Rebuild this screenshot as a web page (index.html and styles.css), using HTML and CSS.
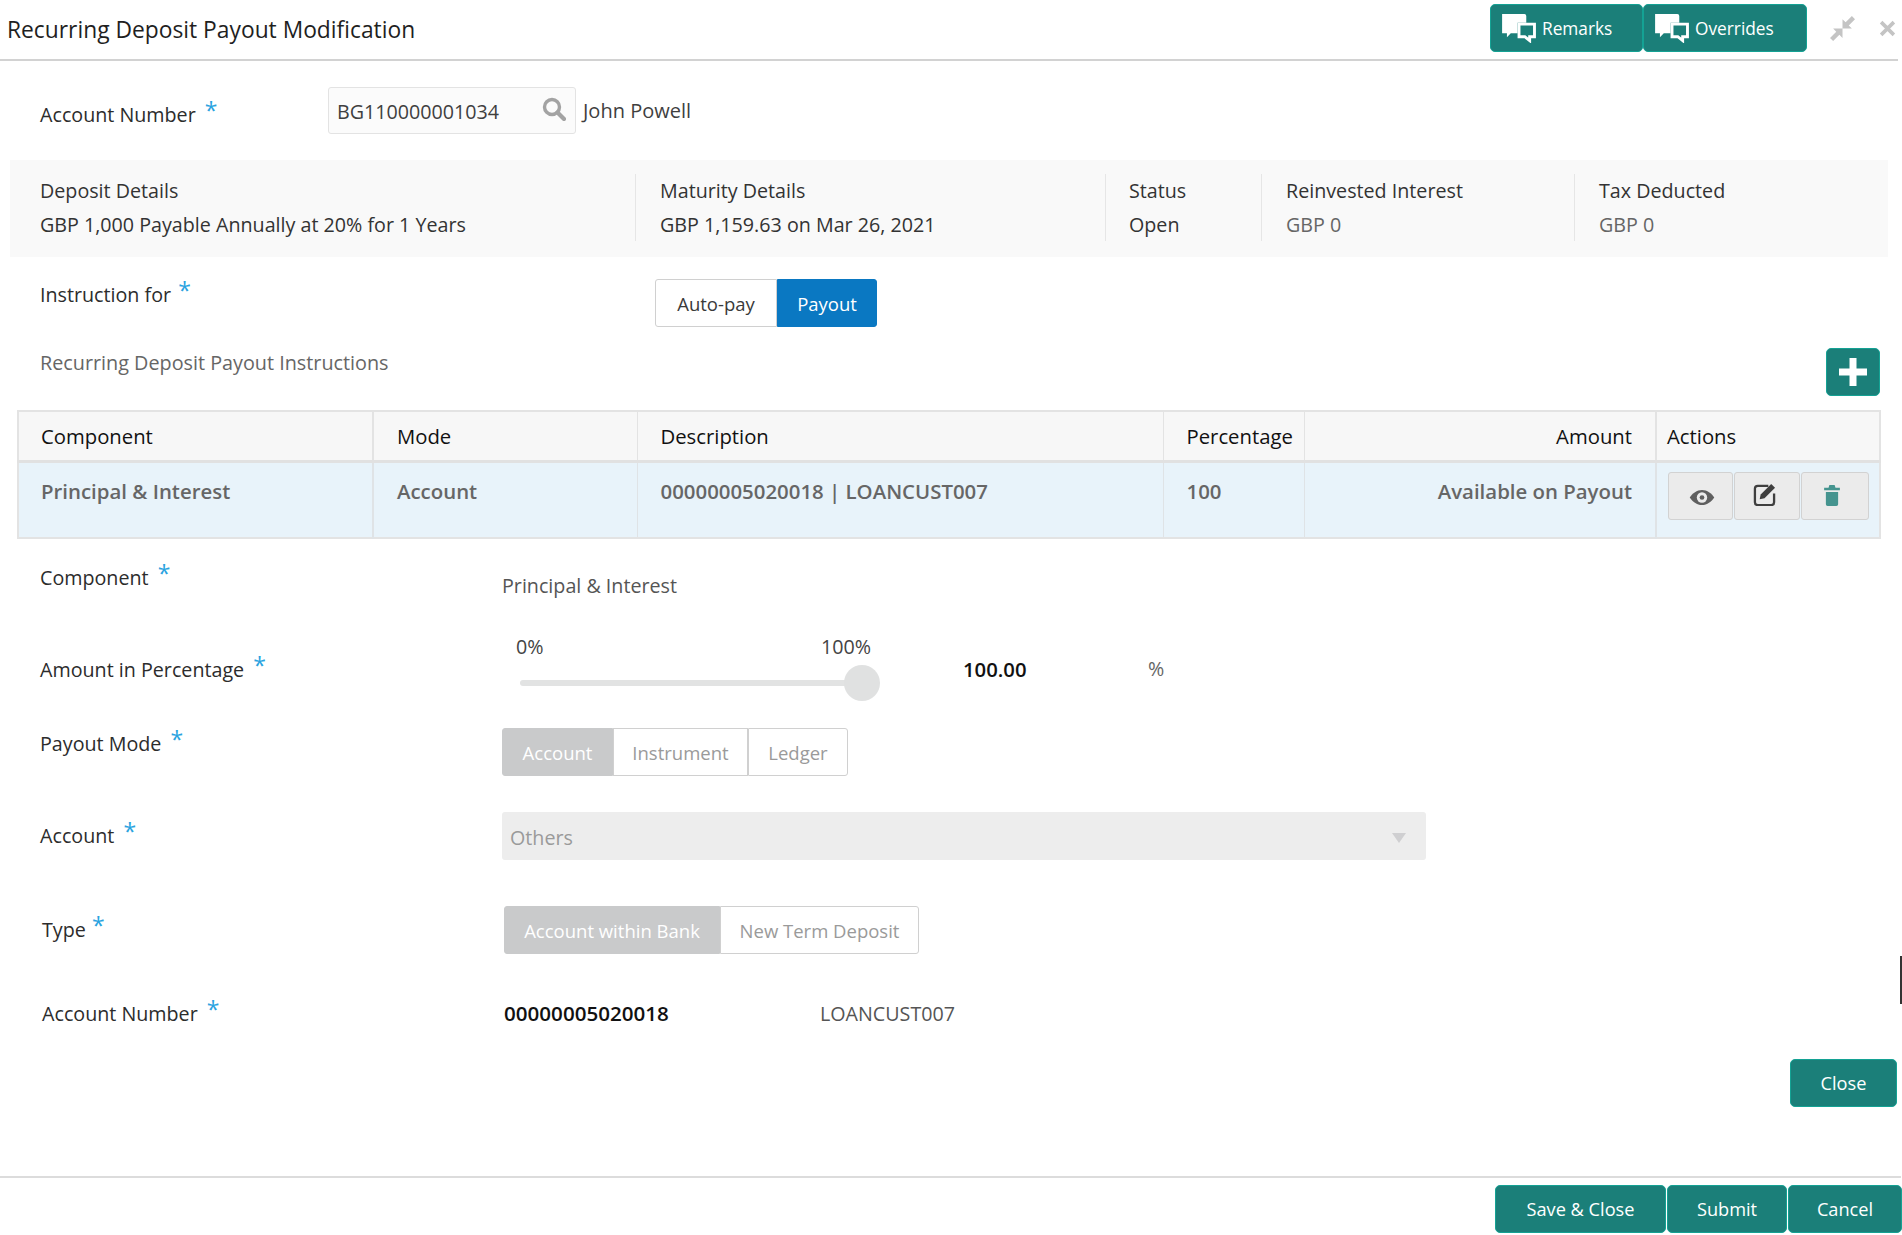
FILE: index.html
```html
<!DOCTYPE html>
<html lang="en">
<head>
<meta charset="utf-8">
<title>Recurring Deposit Payout Modification</title>
<link rel="stylesheet" href="styles.css">
</head>
<body>
<header class="topbar">
  <h1 class="title">Recurring Deposit Payout Modification</h1>
  <div class="top-actions">
    <div class="btn-group btn-group-top">
      <button class="btn btn-top btn-remarks"><svg class="chat" viewBox="0 0 36 30"><path d="M0 0h23a2 2 0 0 1 2 2v7h-9v11H9l-4 4v-4H0z" fill="#fff"/><path d="M17.500 10.500h16v13h-5v4l-5-4h-6z" fill="#1b7f79" stroke="#fff" stroke-width="3"/></svg>Remarks</button>
      <button class="btn btn-top btn-overrides"><svg class="chat" viewBox="0 0 36 30"><path d="M0 0h23a2 2 0 0 1 2 2v7h-9v11H9l-4 4v-4H0z" fill="#fff"/><path d="M17.500 10.500h16v13h-5v4l-5-4h-6z" fill="#1b7f79" stroke="#fff" stroke-width="3"/></svg>Overrides</button>
    </div>
    <svg class="win-icon win-min" viewBox="0 0 24 24"><path d="M21 0l3 3-6 6 3 3H12V3l3 3zM3 24l-3-3 6-6-3-3h9v9l-3-3z" fill="#c4c4c4"/></svg>
    <svg class="win-icon win-close" viewBox="0 0 16 16"><path d="M2 2l12 12M14 2L2 14" stroke="#c4c4c4" stroke-width="3.400" fill="none"/></svg>
  </div>
</header>

<main class="content">
  <section class="acct-row">
    <label class="label label-acct">Account Number <span class="req">*</span></label>
    <div class="search-input">
      <span class="search-value">BG110000001034</span>
      <svg class="search-icon" viewBox="0 0 24 24"><circle cx="10" cy="10" r="7.500" fill="none" stroke="#a3a3a3" stroke-width="3.400"/><path d="M15.500 15.500L22 22" stroke="#a3a3a3" stroke-width="4.200" stroke-linecap="round"/></svg>
    </div>
    <span class="acct-name">John Powell</span>
  </section>

  <section class="summary">
    <div class="sum-col sum-deposit"><div>Deposit Details</div><div>GBP 1,000 Payable Annually at 20% for 1 Years</div></div>
    <div class="sum-col sum-maturity"><div>Maturity Details</div><div>GBP 1,159.63 on Mar 26, 2021</div></div>
    <div class="sum-col sum-status"><div>Status</div><div>Open</div></div>
    <div class="sum-col sum-reinv"><div>Reinvested Interest</div><div class="muted">GBP 0</div></div>
    <div class="sum-col sum-tax"><div>Tax Deducted</div><div class="muted">GBP 0</div></div>
  </section>

  <section class="instr-row">
    <label class="label label-instr">Instruction for <span class="req req-near">*</span></label>
    <div class="toggle">
      <span class="seg seg-auto">Auto-pay</span><span class="seg seg-on">Payout</span>
    </div>
  </section>

  <section class="list-head">
    <h2 class="list-title">Recurring Deposit Payout Instructions</h2>
    <button class="btn btn-add"><svg viewBox="0 0 28 28"><path d="M10.500 0h7v10.500H28v7H17.500V28h-7V17.500H0v-7h10.500z" fill="#fff"/></svg></button>
  </section>

  <table class="grid">
    <colgroup>
      <col class="c1"><col class="c2"><col class="c3"><col class="c4"><col class="c5"><col class="c6">
    </colgroup>
    <thead>
      <tr><th>Component</th><th>Mode</th><th>Description</th><th>Percentage</th><th class="right">Amount</th><th class="th-actions">Actions</th></tr>
    </thead>
    <tbody>
      <tr>
        <td>Principal &amp; Interest</td><td>Account</td><td>00000005020018 | LOANCUST007</td><td>100</td><td class="right">Available on Payout</td>
        <td class="td-actions">
          <div class="row-actions">
            <button class="act act-view"><svg viewBox="0 0 28 18"><path d="M1 9c3-4.500 7.500-8 13-8s10 3.500 13 8c-3 4.500-7.500 8-13 8S4 13.500 1 9z" fill="#5f5f5f"/><circle cx="14" cy="9" r="5.500" fill="#ebebeb"/><circle cx="14" cy="9" r="2.500" fill="#5f5f5f"/></svg></button>
            <button class="act act-edit"><svg viewBox="0 0 24 24"><path d="M16 3H5a3 3 0 0 0-3 3v14a3 3 0 0 0 3 3h14a3 3 0 0 0 3-3v-9" fill="none" stroke="#3f3f3f" stroke-width="2.400"/><path d="M8 12L19 1l4 4-11 11-5 1z" fill="#3f3f3f"/></svg></button>
            <button class="act act-del"><svg viewBox="0 0 18 24"><path d="M6 0h6l1 3h5v3H0V3h5zM2 8h14v14a2 2 0 0 1-2 2H4a2 2 0 0 1-2-2z" fill="#45948f"/></svg></button>
          </div>
        </td>
      </tr>
    </tbody>
  </table>

  <section class="form">
    <div class="f-row r-comp">
      <label class="label">Component <span class="req">*</span></label>
      <span class="f-text">Principal &amp; Interest</span>
    </div>
    <div class="f-row r-pct">
      <label class="label">Amount in Percentage <span class="req">*</span></label>
      <div class="slider">
        <div class="slider-labels"><span>0%</span><span>100%</span></div>
        <div class="track"><span class="thumb"></span></div>
      </div>
      <span class="pct-value">100.00</span>
      <span class="pct-sign">%</span>
    </div>
    <div class="f-row r-mode">
      <label class="label">Payout Mode <span class="req">*</span></label>
      <div class="toggle toggle-off">
        <span class="seg seg-dis seg-w1">Account</span><span class="seg seg-w2">Instrument</span><span class="seg seg-w3">Ledger</span>
      </div>
    </div>
    <div class="f-row r-acct">
      <label class="label">Account <span class="req">*</span></label>
      <div class="select"><span>Others</span><span class="caret"></span></div>
    </div>
    <div class="f-row r-type">
      <label class="label label-in">Type <span class="req req-near">*</span></label>
      <div class="toggle toggle-off toggle-type">
        <span class="seg seg-dis seg-w4">Account within Bank</span><span class="seg seg-w5">New Term Deposit</span>
      </div>
    </div>
    <div class="f-row r-num">
      <label class="label label-in">Account Number <span class="req">*</span></label>
      <span class="num-value">00000005020018</span>
      <span class="num-name">LOANCUST007</span>
    </div>
    <div class="close-row"><button class="btn btn-close">Close</button></div>
  </section>
</main>

<footer class="footer">
  <div class="btn-group">
    <button class="btn btn-save">Save &amp; Close</button>
    <button class="btn btn-submit">Submit</button>
    <button class="btn btn-cancel">Cancel</button>
  </div>
</footer>
<span class="edge-mark"></span>
</body>
</html>
```

FILE: styles.css
```css
* { box-sizing: border-box; }
html, body { margin: 0; padding: 0; }
body {
  width: 1902px;
  height: 1235px;
  overflow: hidden;
  position: relative;
  display: flex;
  flex-direction: column;
  background: #fff;
  color: #2c2c2c;
  font-family: "Open Sans", "Noto Sans", sans-serif;
  font-size: 19.7px;
}
button { font-family: inherit; cursor: pointer; }

.topbar {
  height: 61px;
  flex: none;
  display: flex;
  justify-content: space-between;
  align-items: flex-start;
  border-bottom: 2px solid #d2d2d2;
  margin-right: 4px;
}
.title {
  margin: 16px 0 0 7px;
  font-size: 22.8px;
  line-height: 28px;
  font-weight: 400;
  color: #1f1f1f;
}
.top-actions { display: flex; align-items: flex-start; padding-top: 4px; width: 408px; }
.btn-group { display: flex; gap: 1px; }
.btn-group-top { gap: 0; }
.btn {
  height: 48px;
  background: #1b7f79;
  border: 1px solid #14a294;
  border-radius: 5px;
  color: #fff;
  font-size: 18.2px;
  padding: 0;
}
.btn-top { display: flex; align-items: center; justify-content: flex-start; padding-left: 11px; gap: 5px; font-size: 17.300px; }
.btn-remarks { width: 153px; }
.btn-overrides { width: 164px; }
.chat { width: 35px; height: 29px; flex: none; }
.win-icon { flex: none; }
.win-min { width: 25px; height: 25px; margin: 12px 0 0 23px; }
.win-close { width: 17px; height: 17px; margin: 16px 0 0 24px; }

.content { flex: 1; display: flex; flex-direction: column; min-height: 0; }

.label { color: #2c2c2c; white-space: nowrap; }
.req { color: #2aa3e0; font-size: 23px; line-height: 14px; position: relative; top: -3px; margin-left: 4px; }
.req-near { margin-left: 2px; }
.r-type .req-near { margin-left: 1px; }

.acct-row { display: flex; margin-top: 26px; height: 47px; padding-left: 40px; }
.label-acct { width: 288px; padding-top: 14px; }
.search-input {
  width: 248px;
  height: 47px;
  border: 1px solid #e3e3e3;
  border-radius: 3px;
  background: #fbfbfb;
  display: flex;
  justify-content: space-between;
  padding: 10px 9px 0 8px;
}
.search-value { color: #3f3f3f; }
.search-icon { width: 24px; height: 24px; margin-top: -1px; }
.acct-name { margin-left: 7px; padding-top: 10px; color: #3f3f3f; font-size: 20px; }

.summary {
  margin: 26px 14px 0 10px;
  height: 97px;
  background: #f9f9f9;
  display: flex;
  padding: 15px 0;
}
.sum-col { line-height: 34px; padding-left: 23px; border-right: 1px solid #e6e6e6; height: 67px; color: #333; margin-top: -1px; white-space: nowrap; }
.muted { color: #666; }
.sum-deposit { width: 626px; padding-left: 30px; }
.sum-maturity { width: 470px; padding-left: 24px;}
.sum-status { width: 156px; }
.sum-reinv { width: 313px; padding-left: 24px; }
.sum-tax { border-right: 0; padding-left: 24px; }

.instr-row { display: flex; margin-top: 22px; height: 48px; padding-left: 40px; }
.label-instr { width: 615px; padding-top: 1px; line-height: 30px; }
.toggle { display: flex; height: 48px; font-size: 18.500px; }
.seg {
  display: flex;
  align-items: center;
  justify-content: center;
  height: 48px;
  border: 1px solid #d0d0d0;
  background: #fff;
  color: #3a3a3a;
  white-space: nowrap;
}
.seg:first-child { border-radius: 3px 0 0 3px; }
.seg:last-child { border-radius: 0 3px 3px 0; }
.seg-auto { width: 122px; }
.seg-on { width: 100px; background: #0a78c2; border-color: #0a78c2; color: #fff; }

.list-head { display: flex; justify-content: space-between; margin-top: 21px; height: 62px; padding: 0 22px 0 40px; }
.list-title { margin: 0; font-size: 19.8px; font-weight: 400; color: #666; line-height: 30px; padding-top: 0; }
.btn-add { width: 54px; display: flex; align-items: center; justify-content: center; }
.btn-add svg { width: 28px; height: 28px; }

.grid {
  margin-left: 17px;
  width: 1862px;
  height: 129px;
  border-collapse: collapse;
  table-layout: fixed;
  border: 2px solid #e3e3e3;
}
.c1 { width: 355px; } .c2 { width: 264px; } .c3 { width: 526px; } .c4 { width: 141px; } .c5 { width: 352px; } .c6 { width: 224px; }
.grid th {
  height: 50px;
  background: #f7f7f7;
  font-weight: 400;
  font-size: 20.3px;
  text-align: left;
  color: #111;
  padding: 1px 10px 0 23px;
  border-right: 1px solid #e3e3e3;
  border-bottom: 3px solid #e1e1e1;
  white-space: nowrap;
}
.grid td {
  background: #e8f3fa;
  color: #666;
  font-weight: 600;
  font-size: 20.4px;
  padding: 14px 22px 0 23px;
  border-right: 1px solid #dfe3e6;
  vertical-align: top;
  white-space: nowrap;
}
.grid th:nth-child(1), .grid td:nth-child(1) { border-right-width: 2px; padding-left: 22px; }
.grid th.right, .grid td.right { text-align: right; padding-right: 23px; border-right-width: 2px; }
.grid th.th-actions { padding-left: 10px; }
.grid td.td-actions { padding: 9px 0 0 11px; border-right: 0; }
.row-actions { display: flex; gap: 1px; }
.act {
  height: 48px;
  background: #ebebeb;
  border: 1px solid #d2d2d2;
  border-radius: 3px;
  padding: 0;
  display: flex;
  align-items: center;
  justify-content: center;
}
.act-view { width: 65px; }
.act-view svg { width: 28px; height: 17px; margin: 4px 0 0 2px; }
.act-edit { width: 66px; }
.act-edit svg { width: 23px; height: 23px; margin-bottom: 2px; margin-right: 5px; }
.act-del { width: 68px; }
.act-del svg { width: 16px; height: 21px; margin-right: 6px; }

.form { flex: 1; position: relative; }
.f-row { display: flex; padding-left: 40px; position: relative; }
.f-row .label { width: 462px; flex: none; }
.f-row .label-in { margin-left: 2px; width: 462px; }
.r-comp { margin-top: 22px; height: 50px; }
.r-comp .label { line-height: 30px; padding-top: 2px; }
.f-text { color: #555; padding-top: 10px; line-height: 30px; }
.r-pct { margin-top: 16px; height: 106px; }
.r-pct .label { padding-top: 28px; line-height: 30px; }
.slider { width: 460px; padding: 0 14px; flex: none; }
.slider-labels { display: flex; justify-content: space-between; line-height: 30px; color: #444; padding-right: 13px; width: 368px; margin-top: 5px; }
.track { width: 340px; height: 6px; margin: 18px 0 0 4px; background: #e2e3e3; border-radius: 3px; position: relative; }
.thumb { position: absolute; right: -20px; top: -15px; width: 36px; height: 36px; border-radius: 50%; background: #e0e1e1; }
.pct-value { color: #111; font-weight: 600; font-size: 20.3px; padding-top: 30px; line-height: 24px; margin-left: 1px; width: 185px; }
.pct-sign { color: #666; padding-top: 30px; line-height: 24px; }
.r-mode { height: 48px; margin-top: -5px; }
.r-mode .label { line-height: 30px; padding-top: 1px; }
.seg-dis { background: #c9cacb; border-color: #c9cacb; color: #fff; }
.toggle-off .seg:not(.seg-dis) { color: #9a9a9a; }
.seg-w1 { width: 111px; }
.seg-w2 { width: 135px; }
.seg-w3 { width: 100px; }
.r-acct { margin-top: 36px; height: 48px; }
.r-acct .label { line-height: 30px; padding-top: 9px; }
.select {
  width: 924px;
  height: 48px;
  background: #ededed;
  border-radius: 3px;
  display: flex;
  justify-content: space-between;
  align-items: center;
  padding: 3px 20px 0 8px;
  color: #9a9a9a;
}
.caret { width: 0; height: 0; border-left: 7px solid transparent; border-right: 7px solid transparent; border-top: 10px solid #cfcfd1; }
.r-type { margin-top: 46px; height: 48px; }
.r-type .label { line-height: 30px; padding-top: 9px; }
.seg-w4 { width: 216px; }
.seg-w5 { width: 199px; }
.r-num { margin-top: 43px; height: 48px; }
.r-num .label { line-height: 30px; padding-top: 2px; }
.num-value { color: #111; font-weight: 600; font-size: 20.6px; width: 316px; line-height: 30px; padding-top: 1px; }
.num-name { color: #555; line-height: 30px; padding-top: 2px; }
.close-row { display: flex; justify-content: flex-end; margin-top: 14px; padding-right: 5px; }
.btn-close { width: 107px; }

.footer {
  height: 59px;
  flex: none;
  border-top: 2px solid #dcdcdc;
  margin-right: 1px;
  display: flex;
  justify-content: flex-end;
  padding-top: 7px;
}
.footer .btn-group { gap: 1px; margin-right: -1px; }
.btn-save { width: 171px; }
.btn-submit { width: 120px; }
.btn-cancel { width: 114px; }
.edge-mark { position: absolute; right: 0; top: 956px; width: 2px; height: 48px; background: #333; }
```
